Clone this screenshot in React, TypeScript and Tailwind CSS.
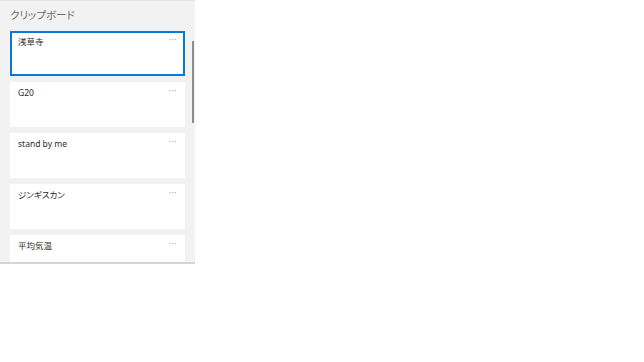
const items = ["浅草寺", "G20", "stand by me", "ジンギスカン", "平均気温"];

const ClipCard = ({ text, active }: { text: string; active?: boolean }) => {
  return (
    <div
      className={
        active
          ? "relative h-[45px] shrink-0 bg-white border-2 border-[#0a78d4] pl-[6px] pt-[3px]"
          : "relative h-[45px] shrink-0 bg-white pl-[8px] pt-[5px]"
      }
    >
      <p className="text-[8.5px] leading-[12px] text-[#2b2b2b] [font-feature-settings:'palt']">
        {text}
      </p>
      <span
        className={
          active
            ? "absolute right-[6px] top-[2px] text-[8px] leading-[10px] tracking-[0.5px] text-[#9a9a9a]"
            : "absolute right-[8px] top-[4px] text-[8px] leading-[10px] tracking-[0.5px] text-[#9a9a9a]"
        }
      >
        ···
      </span>
    </div>
  );
};

const App = () => {
  return (
    <div className="w-[644px] h-[362px] bg-white font-['Noto_Sans','Noto_Sans_CJK_JP',sans-serif]">
      <div className="relative w-[195px] h-[264px] bg-[#f2f2f2] border-t border-[#e2e2e2] border-b-2 border-b-[#d4d4d4] overflow-hidden">
        <div className="h-[30px] pl-[10px] pt-[7px]">
          <h5 className="text-[10.5px] leading-[14px] text-[#6b6b6b] [font-feature-settings:'palt']">
            クリップボード
          </h5>
        </div>
        <div className="flex flex-col gap-[6px] pl-[10px] pr-[10px]">
          {items.map((t, i) => (
            <ClipCard key={t} text={t} active={i === 0} />
          ))}
        </div>
        <div className="absolute right-[1px] top-[40px] w-[2px] h-[82px] bg-[#8c8c8c]" />
      </div>
    </div>
  );
};

export default App;
